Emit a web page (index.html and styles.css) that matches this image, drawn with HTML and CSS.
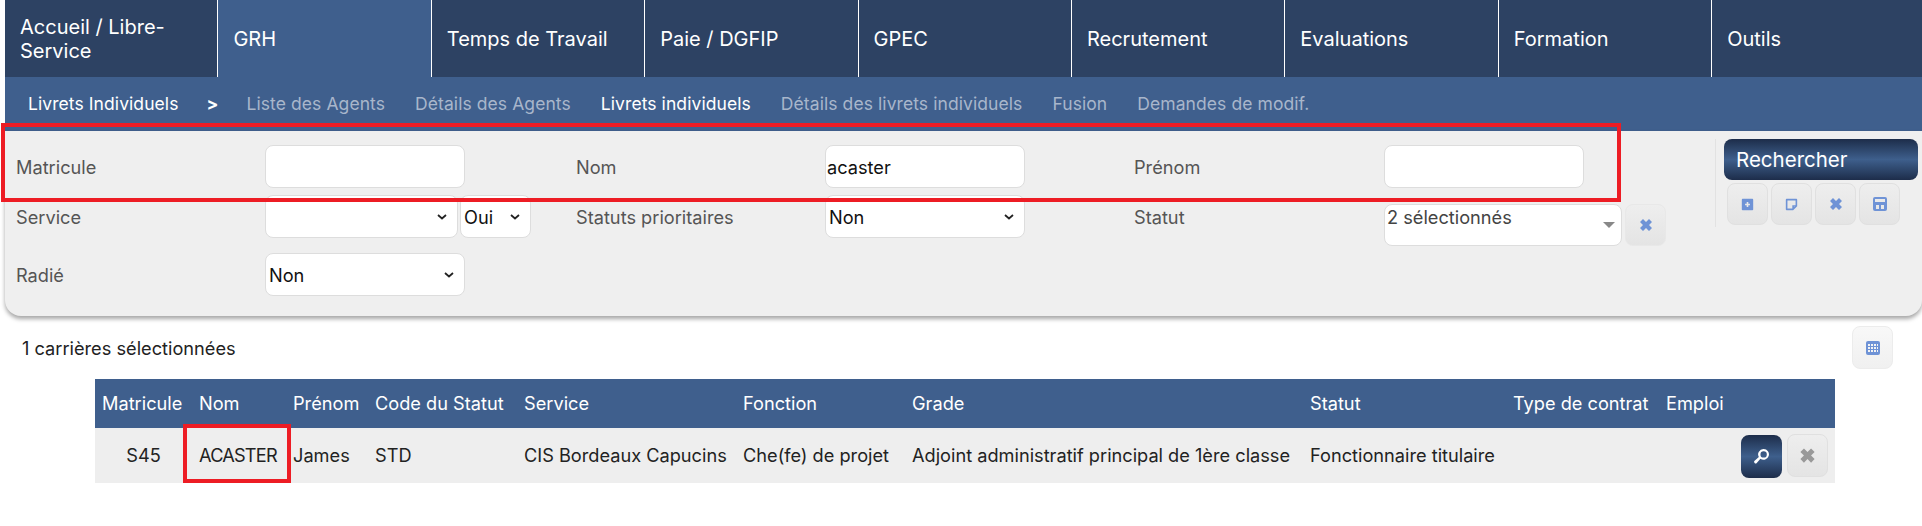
FILE: index.html
```html
<!DOCTYPE html>
<html lang="fr">
<head>
    <meta charset="UTF-8">
    <title>Livrets individuels</title>
    <link rel="stylesheet" href="styles.css">
</head>
<body>
    <svg class="sprites" width="0" height="0">
        <symbol id="i-x" viewBox="0 0 16 16"><path d="M2 5l3-3 3 3 3-3 3 3-3 3 3 3-3 3-3-3-3 3-3-3 3-3z"/></symbol>
        <symbol id="i-plus" viewBox="0 0 16 16"><path fill-rule="evenodd" d="M2 1h12a1 1 0 0 1 1 1v12a1 1 0 0 1-1 1H2a1 1 0 0 1-1-1V2a1 1 0 0 1 1-1zm5 4v2H5v2h2v2h2V9h2V7H9V5z"/></symbol>
        <symbol id="i-note" viewBox="0 0 16 16"><path fill-rule="evenodd" d="M2 1h12a1 1 0 0 1 1 1v8l-5 5H2a1 1 0 0 1-1-1V2a1 1 0 0 1 1-1zm1 2v10h6V9h4V3zm8 8v.5l1-1h-1z"/></symbol>
        <symbol id="i-save" viewBox="0 0 16 16"><path fill-rule="evenodd" d="M3 1h10a2 2 0 0 1 2 2v10a2 2 0 0 1-2 2H3a2 2 0 0 1-2-2V3a2 2 0 0 1 2-2zm0 2v3h10V3zm1 6v4h3V9zm5 0v4h3V9z"/></symbol>
        <symbol id="i-grid" viewBox="0 0 16 16"><path fill-rule="evenodd" d="M3 1h10a2 2 0 0 1 2 2v10a2 2 0 0 1-2 2H3a2 2 0 0 1-2-2V3a2 2 0 0 1 2-2zm0 3v2h2V4zm3 0v2h2V4zm3 0v2h2V4zm3 0v2h1V4zM3 7v2h2V7zm3 0v2h2V7zm3 0v2h2V7zm3 0v2h1V7zM3 10v2h2v-2zm3 0v2h2v-2zm3 0v2h2v-2zm3 0v2h1v-2z"/></symbol>
        <symbol id="i-search" viewBox="0 0 16 16"><path fill-rule="evenodd" d="M10 1a5 5 0 1 1-3 9l-3.500 4a1.400 1.400 0 0 1-2-2L5.500 8.500A5 5 0 0 1 10 1zm0 2a3 3 0 1 0 0 6 3 3 0 0 0 0-6z"/></symbol>
    </svg>

    <nav class="tabs">
        <a class="tab">Accueil / Libre-Service</a>
        <a class="tab active">GRH</a>
        <a class="tab">Temps de Travail</a>
        <a class="tab">Paie / DGFIP</a>
        <a class="tab">GPEC</a>
        <a class="tab">Recrutement</a>
        <a class="tab">Evaluations</a>
        <a class="tab">Formation</a>
        <a class="tab">Outils</a>
    </nav>

    <div class="subnav">
        <a class="on">Livrets Individuels</a>
        <b class="sep">&gt;</b>
        <a>Liste des Agents</a>
        <a>Détails des Agents</a>
        <a class="on">Livrets individuels</a>
        <a>Détails des livrets individuels</a>
        <a>Fusion</a>
        <a>Demandes de modif.</a>
    </div>

    <section class="panel">
        <form class="filters">
            <label>Matricule</label>
            <div class="field"><input type="text" class="w200"></div>
            <label>Nom</label>
            <div class="field"><input type="text" class="w200" value="acaster"></div>
            <label>Prénom</label>
            <div class="field"><input type="text" class="w200"></div>

            <label>Service</label>
            <div class="field">
                <select class="w193"><option></option></select>
                <select class="w71"><option>Oui</option></select>
            </div>
            <label>Statuts prioritaires</label>
            <div class="field"><select class="w200"><option>Non</option></select></div>
            <label>Statut</label>
            <div class="field statut">
                <div class="multi">2 sélectionnés<i class="caret"></i></div>
                <button type="button" class="btn"><svg class="ic-x"><use href="#i-x"/></svg></button>
            </div>

            <label>Radié</label>
            <div class="field"><select class="w200"><option>Non</option></select></div>
        </form>

        <div class="actions">
            <button type="button" class="search-btn">Rechercher</button>
            <div class="tools">
                <button type="button" class="btn"><svg><use href="#i-plus"/></svg></button>
                <button type="button" class="btn"><svg><use href="#i-note"/></svg></button>
                <button type="button" class="btn"><svg class="ic-x"><use href="#i-x"/></svg></button>
                <button type="button" class="btn"><svg class="ic-lg"><use href="#i-save"/></svg></button>
            </div>
        </div>
    </section>

    <div class="result-bar">
        <span>1 carrières sélectionnées</span>
        <button type="button" class="btn light"><svg class="ic-lg"><use href="#i-grid"/></svg></button>
    </div>

    <table class="results">
        <thead>
            <tr>
                <th class="c-mat">Matricule</th>
                <th class="c-nom">Nom</th>
                <th class="c-pre">Prénom</th>
                <th class="c-code">Code du Statut</th>
                <th class="c-serv">Service</th>
                <th class="c-fonc">Fonction</th>
                <th class="c-grade">Grade</th>
                <th class="c-stat">Statut</th>
                <th class="c-type">Type de contrat</th>
                <th class="c-emp">Emploi</th>
                <th></th>
            </tr>
        </thead>
        <tbody>
            <tr>
                <td class="center">S45</td>
                <td class="marked">ACASTER</td>
                <td>James</td>
                <td>STD</td>
                <td>CIS Bordeaux Capucins</td>
                <td>Che(fe) de projet</td>
                <td>Adjoint administratif principal de 1ère classe</td>
                <td>Fonctionnaire titulaire</td>
                <td></td>
                <td></td>
                <td class="row-btns">
                    <button type="button" class="btn dark"><svg class="ic-search"><use href="#i-search"/></svg></button>
                    <button type="button" class="btn grey"><svg class="ic-xl"><use href="#i-x"/></svg></button>
                </td>
            </tr>
        </tbody>
    </table>

    <!-- red annotation over the first row of filters -->
    <div class="callout"></div>
</body>
</html>
```

FILE: styles.css
```css
/* Page */
body {
    margin: 0;
    padding-left: 5px;
    position: relative;
    overflow: hidden;
    height: 526px;
    font-family: Inter, Lato, sans-serif;
    font-size: 18.200px;
    color: #222;
    background: white;
}

.sprites {
    position: absolute;
}

/* Top tabs */
.tabs {
    display: grid;
    grid-template-columns: repeat(9, 213.4px);
    height: 77px;
    background: #2d4263;
}

.tab {
    display: flex;
    align-items: center;
    padding: 1px 15px 0;
    border-right: 1px solid white;
    color: white;
    font-size: 20px;
    line-height: 24px;
}

.tab:last-child {
    border-right: none;
}

.tab.active {
    background: #3f5f8d;
}

/* Second level menu */
.subnav {
    display: flex;
    align-items: center;
    gap: 30px;
    height: 54px;
    box-sizing: border-box;
    padding: 0 0 1px 23px;
    background: #3f5f8d;
    color: #a8b6cb;
    font-size: 17.500px;
    letter-spacing: 0.08px;
}

.subnav .on {
    color: white;
}

.subnav .sep {
    color: white;
    margin: 0 -2px 0 -2px;
}

/* Filter panel */
.panel {
    display: flex;
    height: 185px;
    background: #efefef;
    border-radius: 0 0 16px 16px;
    box-shadow: 0 3px 4px rgba(0, 0, 0, 0.35);
}

.filters {
    display: grid;
    grid-template-columns: 249px 311px 249px 309px 250px 331px;
    grid-auto-rows: min-content;
    row-gap: 7px;
    align-items: start;
    padding: 14px 0 0 11px;
}

.filters label {
    height: 43px;
    line-height: 45px;
    color: #555;
    white-space: nowrap;
}

.field {
    display: flex;
    gap: 2px;
}

input, select {
    box-sizing: border-box;
    height: 43px;
    background: white;
    border: 1px solid #ddd;
    border-radius: 8px;
    font-family: Inter, sans-serif;
    font-size: 18.200px;
    color: #111;
}

/* thin chevron instead of the native arrow */
select {
    appearance: none;
    padding: 0 0 0 3px;
    background-image: url("data:image/svg+xml,%3Csvg xmlns='http://www.w3.org/2000/svg' width='10' height='6'%3E%3Cpath d='M1 1l4 3.500 4-3.500' fill='none' stroke='%23222' stroke-width='1.800'/%3E%3C/svg%3E");
    background-repeat: no-repeat;
    background-position: right 10px center;
}

input {
    padding: 0 1px;
}

.w200 { width: 200px; }
.w193 { width: 193px; }
.w71 { width: 71px; }

.statut {
    gap: 3px;
    margin-top: 9px;
}

.multi {
    position: relative;
    box-sizing: border-box;
    width: 238px;
    height: 42px;
    padding: 1px 2px;
    background: white;
    border: 1px solid #ddd;
    border-radius: 8px;
    color: #444;
}

.caret {
    position: absolute;
    right: 6px;
    top: 17px;
    border-left: 6px solid transparent;
    border-right: 6px solid transparent;
    border-top: 6px solid #888;
}

.btn {
    display: inline-flex;
    align-items: center;
    justify-content: center;
    box-sizing: border-box;
    width: 41px;
    height: 42px;
    padding: 0;
    background: linear-gradient(#eeeeee, #e4e4e4);
    border: 1px solid #e0e0e0;
    border-radius: 8px;
    color: #6f93d6;
}

.btn svg {
    width: 13px;
    height: 13px;
    fill: currentColor;
}

.btn svg.ic-x {
    width: 16px;
    height: 16px;
}

.btn svg.ic-lg {
    width: 16px;
    height: 16px;
}

.btn svg.ic-xl {
    width: 19px;
    height: 19px;
}

.btn svg.ic-search {
    width: 17px;
    height: 17px;
}

.statut .btn {
    border-color: #e8e8e8;
}

.actions {
    box-sizing: border-box;
    width: 207px;
    height: 88px;
    margin-top: 8px;
    padding-left: 8px;
    border-left: 1px solid #e2e2e2;
}

.search-btn {
    display: block;
    width: 194px;
    height: 41px;
    padding: 0 0 0 12px;
    text-align: left;
    background: linear-gradient(#1d2d4a, #3e5f8c 50%, #1d2d4a);
    border: none;
    border-radius: 8px;
    color: white;
    font-family: Inter, sans-serif;
    font-size: 20.500px;
}

.tools {
    display: flex;
    gap: 3px;
    margin: 3px 0 0 3px;
}

/* Result count */
.result-bar {
    display: flex;
    justify-content: space-between;
    align-items: center;
    width: 1888px;
    height: 43px;
    margin-top: 10px;
    padding-left: 17px;
    box-sizing: border-box;
}

.btn.light {
    background: linear-gradient(#f8f8f8, #f0f0f0);
    border-color: #ececec;
    height: 43px;
}

/* Results table */
.results {
    margin: 10px 0 0 90px;
    width: 1740px;
    table-layout: fixed;
    border-collapse: collapse;
}

.results th {
    box-sizing: border-box;
    height: 49px;
    padding: 0 0 2px 7px;
    background: #3f5f8d;
    color: white;
    font-weight: normal;
    text-align: left;
    white-space: nowrap;
}

.results td {
    box-sizing: border-box;
    height: 55px;
    padding: 0 0 2px 7px;
    background: #eeeeee;
    white-space: nowrap;
}

.results td.center {
    padding: 0 0 2px;
    text-align: center;
}

.c-mat { width: 97px; }
.c-nom { width: 94px; }
.c-pre { width: 82px; }
.c-code { width: 149px; }
.c-serv { width: 219px; }
.c-fonc { width: 169px; }
.c-grade { width: 398px; }
.c-stat { width: 203px; }
.c-type { width: 153px; }
.c-emp { width: 66px; }

.results td.row-btns {
    padding: 0 7px 0 0;
    text-align: right;
    font-size: 0;
}

.row-btns .btn {
    height: 43px;
    margin-left: 5px;
}

.btn.dark {
    background: linear-gradient(#1d2d4a, #3e5f8c 50%, #1d2d4a);
    border: none;
    color: white;
}

.btn.grey {
    color: #999;
}

/* Red annotations */
.callout {
    position: absolute;
    left: 1px;
    top: 123px;
    width: 1612px;
    height: 71px;
    border: 4px solid #ed1c24;
}

.marked {
    position: relative;
    letter-spacing: -0.8px;
}

.marked::after {
    content: '';
    position: absolute;
    left: -9px;
    right: -5px;
    top: -4px;
    bottom: 0;
    border: 4px solid #ed1c24;
}
```
